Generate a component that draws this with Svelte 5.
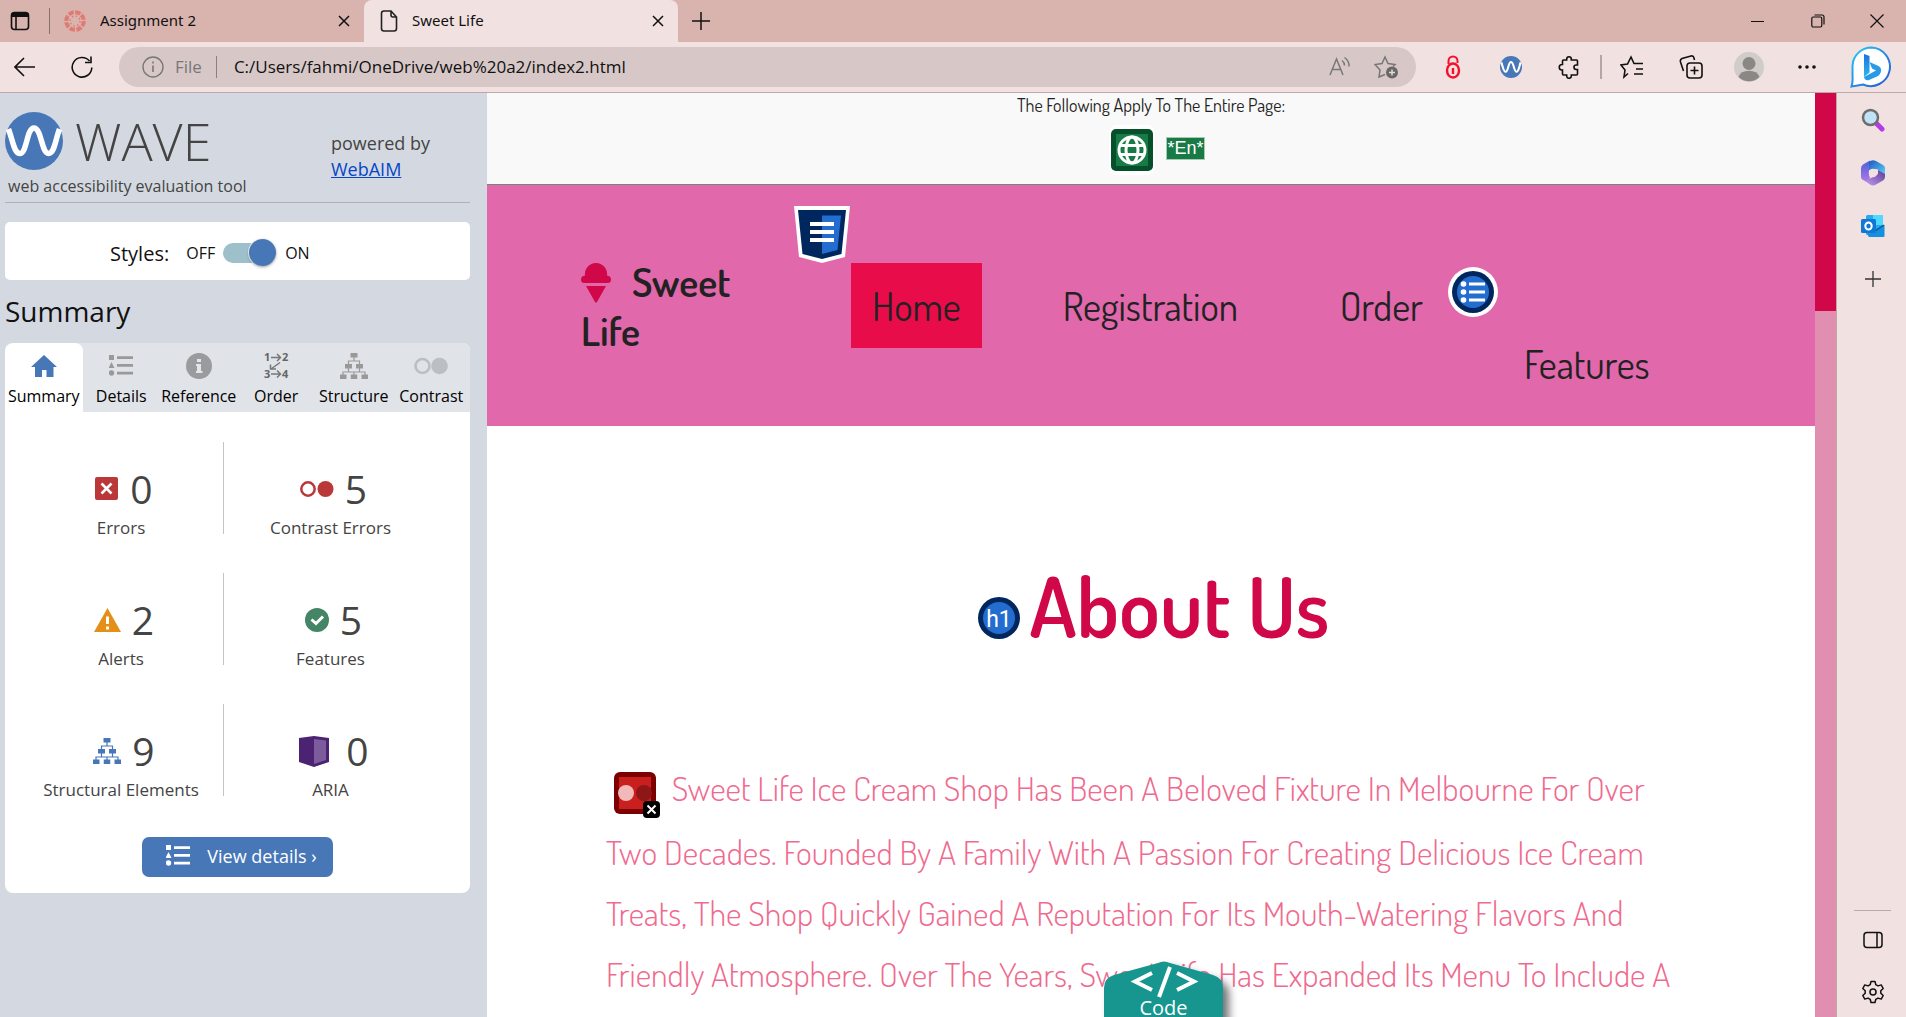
<script lang="ts">
  let stylesOn = $state(true);
  let address = $state('C:/Users/fahmi/OneDrive/web%20a2/index2.html');
  const tabs = ['Summary', 'Details', 'Reference', 'Order', 'Structure', 'Contrast'];
  let active = $state('Summary');
  const stats = [
    { icon: 'error', value: 0, label: 'Errors' },
    { icon: 'contrast', value: 5, label: 'Contrast Errors' },
    { icon: 'alert', value: 2, label: 'Alerts' },
    { icon: 'feature', value: 5, label: 'Features' },
    { icon: 'structure', value: 9, label: 'Structural Elements' },
    { icon: 'aria', value: 0, label: 'ARIA' }
  ];
</script>

{#snippet close()}
  <svg width="14" height="14" viewBox="0 0 14 14" fill="none" stroke="#111" stroke-width="1.5"><path d="M2 2l10 10M12 2L2 12" /></svg>
{/snippet}

{#snippet listIcon(w: number, color: string)}
  <svg width={w} height={w} viewBox="0 0 24 24" fill={color}>
    <rect x="0" y="1" width="5" height="5" /><path d="M2.500 8L5.500 14H-.5z" /><circle cx="2.500" cy="19" r="2.700" />
    <path d="M8 2.200h16v2.800H8zM8 10h16v2.800H8zM8 17.800h16v2.800H8z" />
  </svg>
{/snippet}

{#snippet tree(color: string)}
  <svg width="28" height="26" viewBox="0 0 28 26" fill={color}>
    <path d="M10.500 0h7v4.500h-7zM5 11h7v4.500H5zM16 11h7v4.500h-7zM0 21.500h6.500V26H0zM10.750 21.500h6.500V26h-6.500zM21.500 21.500H28V26h-6.500z" />
    <path d="M14 4v4M8.500 11V8h11v3M8.500 15v4M19.500 15v4M3 22v-3h22v3M14 19v3" fill="none" stroke={color} stroke-width="1.200" />
  </svg>
{/snippet}

{#snippet waveMark(size: number)}
  <svg width={size} height={size} viewBox="0 0 58 58">
    <circle cx="29" cy="29" r="29" fill="#4777b7" />
    <path d="M3.500 17C8 29 9 41.500 15 41.500C22 41.500 21.500 16 29 16S36.500 41.500 43.500 41.500C49.500 41.500 50 29 54.500 17" fill="none" stroke="#fff" stroke-width="5.500" />
  </svg>
{/snippet}

<div class="window">
  <header>
    <div class="tabbar">
      <button class="bare workspace" aria-label="Tab actions">
        <svg width="20" height="20" viewBox="0 0 20 20" fill="none" stroke="#111" stroke-width="1.600"><rect x="1.500" y="1.500" width="17" height="17" rx="3" /><path d="M1.500 4h17" stroke-width="4" /><path d="M6 4v14" /></svg>
      </button>
      <div class="tab">
        <svg width="22" height="22" viewBox="0 0 22 22" fill="none" stroke="#e07a74"><circle cx="11" cy="11" r="8.800" stroke-width="4" stroke-dasharray="5.400 1.500" /><circle cx="11" cy="11" r="5" stroke-width="1.500" stroke-dasharray="1.500 2.430" /></svg>
        <span>Assignment 2</span>
        <button class="bare" aria-label="Close Assignment 2">{@render close()}</button>
      </div>
      <div class="tab current">
        <svg width="18" height="22" viewBox="0 0 18 22" fill="none" stroke="#222" stroke-width="1.600"><path d="M11 1H4Q1.500 1 1.500 3.500v15Q1.500 21 4 21h10q2.500 0 2.500-2.500V7zM11 1v4q0 2 2 2h3.500" /></svg>
        <span>Sweet Life</span>
        <button class="bare" aria-label="Close Sweet Life">{@render close()}</button>
      </div>
      <button class="bare newtab" aria-label="New tab">
        <svg width="20" height="20" viewBox="0 0 20 20" stroke="#111" stroke-width="1.500"><path d="M10 1v18M1 10h18" /></svg>
      </button>
      <div class="controls">
        <button class="bare" aria-label="Minimize"><svg width="14" height="14" viewBox="0 0 14 14" stroke="#111"><path d="M0 7.500h13" /></svg></button>
        <button class="bare" aria-label="Restore"><svg width="14" height="14" viewBox="0 0 14 14" fill="none" stroke="#111" stroke-width="1.200"><rect x=".8" y="3" width="10" height="10" rx="1.500" /><path d="M3.500 1h7.500q2 0 2 2v7.500" /></svg></button>
        <button class="bare" aria-label="Close window"><svg width="14" height="14" viewBox="0 0 14 14" stroke="#111" stroke-width="1.200"><path d="M.5.5l13 13M13.500.5l-13 13" /></svg></button>
      </div>
    </div>
    <div class="toolbar">
      <button class="bare back" aria-label="Back"><svg width="22" height="20" viewBox="0 0 22 20" fill="none" stroke="#111" stroke-width="1.600"><path d="M21 10H1.500M10 1L1 10l9 9" /></svg></button>
      <button class="bare reload" aria-label="Reload"><svg width="22" height="22" viewBox="0 0 22 22" fill="none" stroke="#111" stroke-width="1.600"><path d="M20.800 11.500A9.800 9.800 0 1 1 18.500 5M20 .5v6h-6" /></svg></button>
      <div class="address">
        <svg width="22" height="22" viewBox="0 0 22 22" fill="none" stroke="#777" stroke-width="1.400"><circle cx="11" cy="11" r="10" /><path d="M11 9.500v6.500M11 5.500v2" stroke-width="1.600" /></svg>
        <span class="scheme">File</span>
        <input aria-label="Address" bind:value={address} />
        <button class="bare" aria-label="Read aloud"><svg width="22" height="22" viewBox="0 0 22 22" fill="none" stroke="#777" stroke-width="1.500"><path d="M1 19L7.500 3 14 19M3.500 13.500h8M13 4.500q2.500 2 2.500 5M15.500 1.500q5 3.500 4.500 9" /></svg></button>
        <button class="bare" aria-label="Add to favorites"><svg width="24" height="24" viewBox="0 0 24 24" fill="none" stroke="#777" stroke-width="1.500"><path d="M11 19.500L5 22l1-7L1 9.500l7-1L11 2l3 6.500 7 1-2 2" /><circle cx="18" cy="17.500" r="6" fill="#6b6767" stroke="none" /><path d="M18 14.500v6M15 17.500h6" stroke="#ddd" /></svg></button>
      </div>
      <div class="extensions">
        <button class="bare" aria-label="Password lock"><svg width="16" height="24" viewBox="0 0 16 24" fill="none" stroke="#f5102c" stroke-width="2.400"><ellipse cx="8" cy="15.500" rx="6" ry="7" /><path d="M3.500 9V6a4.500 4.500 0 0 1 9 0v2" stroke-width="2" /><path d="M8 13v6" /></svg></button>
        <button class="bare" aria-label="WAVE">{@render waveMark(22)}</button>
        <button class="bare" aria-label="Extensions"><svg width="22" height="24" viewBox="0 0 22 24" fill="none" stroke="#111" stroke-width="1.600"><path d="M5.500 5h3.200V4a2.300 2.300 0 0 1 4.600 0v1h5.200q1 0 1 1v4h-1.300a2.200 2.200 0 0 0 0 4.500h1.300V19q0 1-1 1h-5.200v1a2.300 2.300 0 0 1-4.600 0v-1H5.500q-1 0-1-1v-4H4a2.700 2.700 0 0 1 0-5.500h.5V6q0-1 1-1z" /></svg></button>
        <button class="bare divided" aria-label="Favorites"><svg width="24" height="24" viewBox="0 0 24 24" fill="none" stroke="#111" stroke-width="1.600"><path d="M8 18.500L4 22l1-7-4-5 6.500-1L11 2l3 6.500h9M16 14h7M14 19h9" /></svg></button>
        <button class="bare" aria-label="Collections"><svg width="24" height="24" viewBox="0 0 24 24" fill="none" stroke="#111" stroke-width="1.600"><rect x="8" y="8" width="15" height="15" rx="3" /><path d="M15.500 11.500v8M11.500 15.500h8M4.500 16L1.500 7q-.7-2.500 1.500-3.500l9-2.500q2.500-.5 3 2l.5 2" /></svg></button>
        <button class="bare" aria-label="Profile"><svg width="30" height="30" viewBox="0 0 30 30"><circle cx="15" cy="15" r="15" fill="#cfccc9" /><circle cx="15" cy="11.500" r="6.500" fill="#8b8784" /><path d="M4.500 25a11 9 0 0 1 21 0A15 15 0 0 1 4.500 25" fill="#8b8784" /></svg></button>
        <button class="bare" aria-label="More"><svg width="20" height="6" viewBox="0 0 20 6" fill="#111"><circle cx="3" cy="3" r="1.800" /><circle cx="10" cy="3" r="1.800" /><circle cx="17" cy="3" r="1.800" /></svg></button>
        <button class="bare" aria-label="Bing chat"><svg width="42" height="42" viewBox="0 0 42 42"><defs><linearGradient id="bub" x1="0" y1="0" x2="1" y2="1"><stop offset="0" stop-color="#25c8f2" /><stop offset="1" stop-color="#2456d6" /></linearGradient><linearGradient id="bing" x1="0" y1="0" x2="0" y2="1"><stop offset="0" stop-color="#1f6fe0" /><stop offset="1" stop-color="#2bb8ee" /></linearGradient></defs><path d="M21.500 1.500A19.300 19.300 0 1 1 13 38.500Q8 39.500 1.500 40.500 3 36 2.500 30V20A19 19 0 0 1 21.500 1.500z" fill="#fff" stroke="url(#bub)" stroke-width="2" /><path d="M14 8l5.500 2v16.500L14 31z" fill="url(#bing)" /><path d="M14 31l12-6.500-4-2-2.500-6.500 9 4q3 1.500 2.500 5t-4 5.500L19 34q-4 1-5-3z" fill="#279be8" /></svg></button>
      </div>
    </div>
  </header>

  <div class="content">
    <aside class="wave">
      <div class="brandrow">
        <div>
          <div class="logo">{@render waveMark(58)}<span>WAVE</span></div>
          <p class="tagline">web accessibility evaluation tool</p>
        </div>
        <p class="powered">powered by<br /><a href="#webaim">WebAIM</a></p>
      </div>
      <div class="styles">
        <span class="lead">Styles:</span>
        <label><span>OFF</span><input type="checkbox" role="switch" aria-label="Styles" bind:checked={stylesOn} /><span>ON</span></label>
      </div>
      <h2>Summary</h2>
      <div class="panel">
        <nav class="tabs">
          {#each tabs as t}
            <button class:active={active === t} onclick={() => (active = t)}>
              <span class="ticon">
                {#if t === 'Summary'}
                  <svg width="26" height="24" viewBox="0 0 26 24" fill="#4777b7"><path d="M13 1L26 13H22.500V23H15.500V16H11V23H4V13H0z" /></svg>
                {:else if t === 'Details'}
                  {@render listIcon(24, '#999')}
                {:else if t === 'Reference'}
                  <svg width="26" height="26" viewBox="0 0 26 26"><circle cx="13" cy="13" r="13" fill="#999b9d" /><path d="M11 6h4v3h-4zM10 11h5v7h1.500v2H10v-2h1v-5h-1z" fill="#e2e5e9" /></svg>
                {:else if t === 'Order'}
                  <svg width="30" height="36" viewBox="-3 -5 30 36" fill="none" stroke="#777" stroke-width="1.500"><g fill="#666" stroke="none" font-family="Open Sans, sans-serif" font-size="11" font-weight="700"><text x="0" y="8">1</text><text x="18" y="8">2</text><text x="0" y="25">3</text><text x="18" y="25">4</text></g><path d="M7 4.500h9M13 1l3.500 3.500L13 8M7 21h9M13 17.500l3.500 3.500-3.500 3.500M16 9.500L7 16M6.500 11.500V16H12" /></svg>
                {:else if t === 'Structure'}
                  {@render tree('#999')}
                {:else}
                  <svg width="34" height="18" viewBox="0 0 34 18"><circle cx="8.500" cy="9" r="7" fill="none" stroke="#bbbec2" stroke-width="2.600" /><circle cx="25.500" cy="9" r="8.300" fill="#bbbec2" /></svg>
                {/if}
              </span>
              {t}
            </button>
          {/each}
        </nav>
        <ul class="stats">
          {#each stats as s}
            <li>
              <div class="num">
                {#if s.icon === 'error'}
                  <svg width="24" height="24" viewBox="0 0 24 24"><rect width="23" height="23" rx="2" fill="#bb3838" /><path d="M6.500 6.500l10 10M16.500 6.500l-10 10" stroke="#fff" stroke-width="2.600" /></svg>
                {:else if s.icon === 'contrast'}
                  <svg width="34" height="16" viewBox="0 0 34 16"><circle cx="8" cy="8" r="6.700" fill="none" stroke="#bb3838" stroke-width="2.500" /><circle cx="25.500" cy="8" r="8" fill="#bb3838" /></svg>
                {:else if s.icon === 'alert'}
                  <svg width="27" height="24" viewBox="0 0 27 24"><path d="M13.500 0L27 24H0z" fill="#e48f18" /><path d="M12 8.500h3V16h-3zM12 18.500h3v3h-3z" fill="#fff" /></svg>
                {:else if s.icon === 'feature'}
                  <svg width="24" height="24" viewBox="0 0 24 24"><circle cx="12" cy="12" r="12" fill="#448566" /><path d="M6.500 11.500L11 15.500 18 8.500" fill="none" stroke="#fff" stroke-width="3" /></svg>
                {:else if s.icon === 'structure'}
                  {@render tree('#4777b7')}
                {:else}
                  <svg width="37" height="31" viewBox="2 0 37 31"><path d="M3 2L18 0 33 2V26L18 31 3 26z" fill="#4b2372" /><path d="M18 3l12 1.500V24L18 28z" fill="#7d5c9c" /></svg>
                {/if}
                <span>{s.value}</span>
              </div>
              <div class="label">{s.label}</div>
            </li>
          {/each}
        </ul>
        <button class="details">{@render listIcon(24, '#fff')}<span>View details ›</span></button>
      </div>
    </aside>

    <main>
      <div class="note">
        <p>The Following Apply To The Entire Page:</p>
        <div class="noteicons">
          <svg width="46" height="50" viewBox="0 0 46 50"><rect width="46" height="50" rx="8" fill="#fff" /><rect x="2" y="4" width="42" height="42" rx="5" fill="#05502a" /><rect x="7" y="9" width="32" height="32" fill="#187a45" /><g fill="none" stroke="#fff" stroke-width="3"><circle cx="23" cy="25" r="13" /><ellipse cx="23" cy="25" rx="6" ry="13" /><path d="M10 20.500h26M10 29.500h26" /></g></svg>
          <span class="lang">*En*</span>
        </div>
      </div>
      <nav class="site">
        <div class="brand">
          <svg width="30" height="40" viewBox="0 0 30 40" fill="#d00748"><path d="M15 0A11 11 0 0 1 26 12.500Q30 13 30 16.500T26.500 20h-23Q0 20 0 16.500T4 12.500A11 11 0 0 1 15 0zM5 23H25L16 39Q15 40 14 39z" /></svg>
          <span>Sweet</span><br />Life
        </div>
        <svg class="cssbadge" width="58" height="58" viewBox="0 0 58 58"><path d="M1 0H57L52 51 29 57 6 51z" fill="#fff" /><path d="M5 4H53L48.500 48 29 53 9.500 48z" fill="#00265e" /><path d="M29 9.500H48L44.500 44 29 48z" fill="#236dd0" /><path d="M17 16h24v4H17zM17 24h24v4H17zM17 32h24v4H17z" fill="#fff" /></svg>
        <a class="here" href="#home">Home</a>
        <a href="#registration">Registration</a>
        <a href="#order">Order</a>
        <svg class="listbadge" width="50" height="50" viewBox="0 0 50 50"><circle cx="25" cy="25" r="25" fill="#fff" /><circle cx="25" cy="25" r="21" fill="#00265e" /><circle cx="25" cy="25" r="16" fill="#236dd0" /><g fill="#fff"><circle cx="15.500" cy="17" r="2.800" /><circle cx="15.500" cy="25" r="2.800" /><circle cx="15.500" cy="33" r="2.800" /><path d="M21 15.500h16v3H21zM21 23.500h16v3H21zM21 31.500h16v3H21z" /></g></svg>
        <a class="low" href="#features">Features</a>
      </nav>
      <section>
        <h1>
          <svg width="42" height="42" viewBox="0 0 42 42"><circle cx="21" cy="21" r="21" fill="#00265e" /><circle cx="21" cy="21" r="16" fill="#236dd0" /><text x="21" y="30" text-anchor="middle" font-family="Roboto, sans-serif" font-size="23" font-weight="400" fill="#fff">h1</text></svg>
          About Us
        </h1>
        <p class="story">
          <svg width="46" height="46" viewBox="0 0 46 46"><rect width="42" height="42" rx="6" fill="#7d0000" /><rect x="5" y="5" width="32" height="32" fill="#c91f1f" /><circle cx="12" cy="21" r="8" fill="#f2b9b9" /><circle cx="30" cy="21" r="8" fill="#8f1616" /><rect x="29" y="29" width="17" height="17" rx="4" fill="#000" /><path d="M33.500 33.500l8 8M41.500 33.500l-8 8" stroke="#fff" stroke-width="2" /></svg>
          Sweet Life Ice Cream Shop Has Been A Beloved Fixture In Melbourne For Over<br />
          Two Decades. Founded By A Family With A Passion For Creating Delicious Ice Cream<br />
          Treats, The Shop Quickly Gained A Reputation For Its Mouth-Watering Flavors And<br />
          Friendly Atmosphere. Over The Years, Sweet Life Has Expanded Its Menu To Include A
        </p>
      </section>
      <button class="code">
        <svg class="shape" width="136" height="80" viewBox="0 0 136 80"><defs><filter id="sh" x="-20%" y="-20%" width="150%" height="150%"><feDropShadow dx="6" dy="6" stdDeviation="4" flood-opacity=".55" /></filter></defs><path filter="url(#sh)" d="M54 2Q60 -1 66 2L109 14Q119 17 119 27V80H0V27Q0 17 10 14z" fill="#18968e" /><path d="M48 12L31 20.500 48 29M73 12L90 20.500 73 29M66 6L55 36" fill="none" stroke="#fff" stroke-width="4" /></svg>
        <span>Code</span>
      </button>
    </main>

    <div class="scroll"><div class="thumb"></div></div>

    <nav class="side">
      <button class="bare" aria-label="Search"><svg width="24" height="24" viewBox="0 0 24 24"><path d="M15 15l6 6" stroke="#b43bea" stroke-width="5" stroke-linecap="round" /><circle cx="9.500" cy="9.500" r="7.500" fill="#c2e2f5" stroke="#6d6d6d" stroke-width="2.500" /></svg></button>
      <button class="bare" aria-label="Microsoft 365"><svg width="24" height="28" viewBox="0 0 24 28"><defs><linearGradient id="m1" x1="0" y1="0" x2="0" y2="1"><stop offset="0" stop-color="#4a5fd8" /><stop offset="1" stop-color="#b07ae6" /></linearGradient><linearGradient id="m2" x1="0" y1="0" x2="1" y2="1"><stop offset="0" stop-color="#1f55c0" /><stop offset="1" stop-color="#5ad6f6" /></linearGradient><linearGradient id="m3" x1="0" y1="1" x2="1" y2="0"><stop offset="0" stop-color="#c79af0" /><stop offset="1" stop-color="#5a3a98" /></linearGradient></defs><path d="M9 1.500L2 5.500Q0 7 0 9v9q0 2 2 3l4 2 3-4-1-3V9z" fill="url(#m1)" /><path d="M8 3q3-3 7-1l7 4q2 1 2 3v7l-8-6-8 1z" fill="url(#m2)" /><path d="M24 15v3q0 2-2 3.500l-7 4q-3 2-6 0L4 22l6-3 7-4V11z" fill="url(#m3)" /><circle cx="12" cy="14" r="4.300" fill="#f1e2e1" /></svg></button>
      <button class="bare" aria-label="Outlook"><svg width="24" height="24" viewBox="0 0 24 24"><rect x="5" y="1" width="17" height="20" rx="1.500" fill="#2aa8ea" /><path d="M12 1h9q1 0 1 1v9H12z" fill="#50d9ff" /><path d="M23.500 11v11q0 1-1 1H8l-2-3z" fill="#1490df" /><path d="M5 11l9 6 9-6" fill="none" stroke="#0a4f9e" stroke-width="1.200" /><rect y="5" width="15" height="14" rx="1.500" fill="#0f78d4" /><ellipse cx="7.500" cy="12" rx="3.200" ry="3.600" fill="none" stroke="#fff" stroke-width="2" /></svg></button>
      <button class="bare" aria-label="Customize"><svg width="18" height="18" viewBox="0 0 18 18" stroke="#333" stroke-width="1.300"><path d="M9 1v16M1 9h16" /></svg></button>
      <span class="rule"></span>
      <button class="bare" aria-label="Hide sidebar"><svg width="20" height="18" viewBox="0 0 20 18" fill="none" stroke="#111" stroke-width="1.500"><rect x="1" y="1.500" width="18" height="15" rx="3" /><path d="M14 1.500v15" /></svg></button>
      <button class="bare" aria-label="Settings"><svg width="24" height="24" viewBox="0 0 24 24" fill="none" stroke="#111" stroke-width="1.500" stroke-linejoin="round"><path d="M10 1.500h4l.8 3.200 2.200 1.200 3.200-1 2 3.600-2.400 2.300v2.400l2.400 2.300-2 3.600-3.200-1-2.200 1.200-.8 3.200h-4l-.8-3.200L7 18.100l-3.200 1-2-3.600 2.400-2.300v-2.400L1.800 8.500l2-3.600 3.200 1 2.200-1.200z" /><circle cx="12" cy="12" r="3" /></svg></button>
    </nav>
  </div>
</div>

<style>
  :global(body) { margin: 0; }
  :global(*) { box-sizing: border-box; }
  .window { height: 100vh; display: flex; flex-direction: column; overflow: hidden; font-family: 'Open Sans', 'Noto Sans', sans-serif; color: #111; }
  svg { display: block; flex: none; }
  p, h1, h2, ul { margin: 0; padding: 0; }
  button { font: inherit; color: inherit; border: 0; padding: 0; background: none; }
  .bare { display: flex; align-items: center; justify-content: center; }

  .tabbar { display: flex; height: 42px; background: #d9b3ad; font-size: 15px; align-items: stretch; }
  .workspace { width: 50px; padding-right: 10px; border-right: 1px solid #8c706c; border-image: linear-gradient(#0000 9px, #8c706c 9px 33px, #0000 33px) 1; }
  .tab { width: 314px; display: flex; align-items: center; gap: 14px; padding: 0 13px 0 14px; }
  .tab span { flex: 1; font-family: 'Noto Sans', sans-serif; line-height: 20px; padding-bottom: 2px; }
  .tab.current { background: #f1e2e1; border-radius: 8px 8px 0 0; padding-left: 16px; }
  .newtab { width: 46px; }
  .controls { margin-left: auto; display: flex; }
  .controls button { width: 60px; }
  .controls button:last-child { width: 58px; }

  .toolbar { display: flex; align-items: center; height: 51px; background: #f1e2e1; border-bottom: 1px solid #bda9a8; }
  .back { width: 49px; }
  .reload { width: 66px; }
  .address { flex: 1; margin-left: 4px; height: 40px; border-radius: 20px; background: #d7c8c7; display: flex; align-items: center; padding: 0 13px 0 23px; gap: 11px; font-size: 17px; }
  .scheme { color: #777; padding-right: 14px; border-right: 1px solid #8c8080; line-height: 22px; }
  .address input { flex: 1; min-width: 0; border: 0; background: none; font: inherit; color: #111; padding: 0 6px 2px; outline: 0; }
  .address button { width: 35px; }
  .extensions { display: flex; align-items: center; width: 490px; }
  .extensions button { width: 58px; }
  .extensions button:first-child { margin-left: 8px; }
  .extensions button:last-child { width: 70px; }
  .extensions .divided { border-left: 2px solid #b5a5a4; margin-left: 2px; height: 24px; width: 63px; }

  .content { flex: 1; min-height: 0; display: flex; }
  .wave { flex: none; width: 487px; background: #d4d9e1; padding: 19px 17px 0 5px; overflow: hidden; }
  .brandrow { height: 91px; display: flex; justify-content: space-between; border-bottom: 1px solid #adb2ba; color: #444; }
  .logo { display: flex; align-items: center; height: 58px; gap: 12px; }
  .logo span { font-size: 52px; font-weight: 300; line-height: 58px; }
  .tagline { font-size: 16px; line-height: 32px; padding-left: 3px; }
  .powered { width: 139px; padding-top: 18px; font-size: 18px; line-height: 26px; }
  .powered a { color: #0645c8; }
  .styles { margin-top: 19px; height: 58px; border-radius: 5px; background: #fff; display: flex; align-items: center; padding: 4px 0 0 105px; gap: 17px; }
  .lead { font-size: 20px; }
  .styles label { display: flex; align-items: center; gap: 8px; font-size: 16px; }
  .styles input { appearance: none; margin: 0 10px 0 0; width: 44px; height: 20px; border-radius: 10px; background: #9ec0ca; position: relative; }
  .styles input::after { content: ''; position: absolute; left: 0; top: -4px; width: 27px; height: 27px; border-radius: 50%; background: #4777b7; box-shadow: 0 1px 3px #0006, 0 0 0 1px #fff; }
  .styles input:checked::after { left: 26px; }
  h2 { font-size: 28px; font-weight: 400; line-height: 38px; padding: 12px 0 13px; }
  .panel { background: #fff; border-radius: 8px; height: 550px; overflow: hidden; }
  .tabs { display: grid; grid-template-columns: repeat(6, 1fr); background: #e0e3e8; height: 69px; }
  .tabs button { font-size: 16px; display: flex; flex-direction: column; align-items: center; line-height: 20px; white-space: nowrap; color: #000; min-width: 0; }
  .tabs .active { background: #fff; border-radius: 8px 8px 0 0; }
  .ticon { height: 43px; padding-top: 3px; display: flex; align-items: center; }
  .stats { list-style: none; display: grid; grid-template-columns: 205px 1fr; row-gap: 39px; padding: 30px 33px 0 14px; }
  .stats li { height: 92px; padding-top: 18px; text-align: center; color: #444; }
  .stats li:nth-child(odd) { border-right: 1px solid #c4c4c4; }
  .num { display: flex; align-items: center; justify-content: center; gap: 11px; height: 58px; font-size: 39px; padding-left: 6px; }
  .num span { line-height: 58px; }
  .label { font-size: 17px; line-height: 20px; }
  .details { margin: 41px auto 0; width: 191px; height: 40px; border-radius: 7px; background: #4777b7; color: #fff; font-size: 18px; display: flex; align-items: center; justify-content: center; gap: 17px; padding: 0 0 2px 8px; }

  main { flex: 1; min-width: 0; background: #fff; overflow: hidden; position: relative; font-family: Dosis, 'Liberation Sans Narrow', Lato, sans-serif; font-weight: 400; color: #222; }
  .note { height: 92px; background: #f9f9f9; border-bottom: 1px solid #6b8a7b; text-align: center; font-size: 18px; }
  .note p { line-height: 25px; }
  .noteicons { display: flex; align-items: center; justify-content: center; gap: 11px; padding: 7px 0 0 12px; }
  .lang { background: #187a45; color: #fff; font: 18px/21px 'Liberation Sans', sans-serif; border: 1px solid #a9c9b7; margin-bottom: 4px; }
  .site { height: 241px; background: #e068ab; display: flex; align-items: flex-start; padding-left: 94px; font-size: 39px; white-space: nowrap; }
  .brand { width: 212px; padding-top: 72px; font-size: 40px; font-weight: 600; line-height: 49px; }
  .brand svg { display: inline-block; vertical-align: -6px; margin-right: 13px; }
  .cssbadge { margin-top: 21px; }
  .site a { color: inherit; text-decoration: none; margin-top: 78px; line-height: 85px; padding: 0 21px; margin-right: 60px; }
  .site .here { background: #e90c4a; }
  .site .listbadge { margin: 82px 5px 0 -56px; }
  .site .low { margin-top: 136px; margin-right: 0; }
  h1 { display: flex; align-items: flex-end; justify-content: center; gap: 9px; height: 213px; padding-left: 6px; color: #d00748; font-size: 84px; line-height: 68px; font-weight: 600; }
  .story { padding: 118px 0 0 119px; font-size: 34px; font-weight: 350; line-height: 61px; color: #f06a8f; white-space: nowrap; }
  .story svg { display: inline-block; vertical-align: -20px; margin: 0 5px 3px 8px; }
  .code { position: absolute; left: 617px; bottom: 0; width: 119px; height: 56px; color: #fff; font: 20px/18px 'Open Sans', sans-serif; display: flex; align-items: flex-end; justify-content: center; }
  .shape { position: absolute; left: 0; top: 0; overflow: visible; }
  .code span { position: relative; }

  .scroll { width: 21px; background: #e08fb0; }
  .thumb { height: 218px; background: #d00748; }
  .side { width: 70px; background: #f1e2e1; border-left: 1px solid #bda9a8; display: flex; flex-direction: column; align-items: center; padding: 0 0 13px 2px; }
  .side button { height: 53px; flex: none; width: 54px; }
  .rule { margin-top: auto; width: 37px; height: 1px; background: #bda9a8; }
  .side .rule ~ button { height: 24px; margin-top: 17px; }
  .side .rule ~ button:last-child { margin-top: 28px; }
</style>
